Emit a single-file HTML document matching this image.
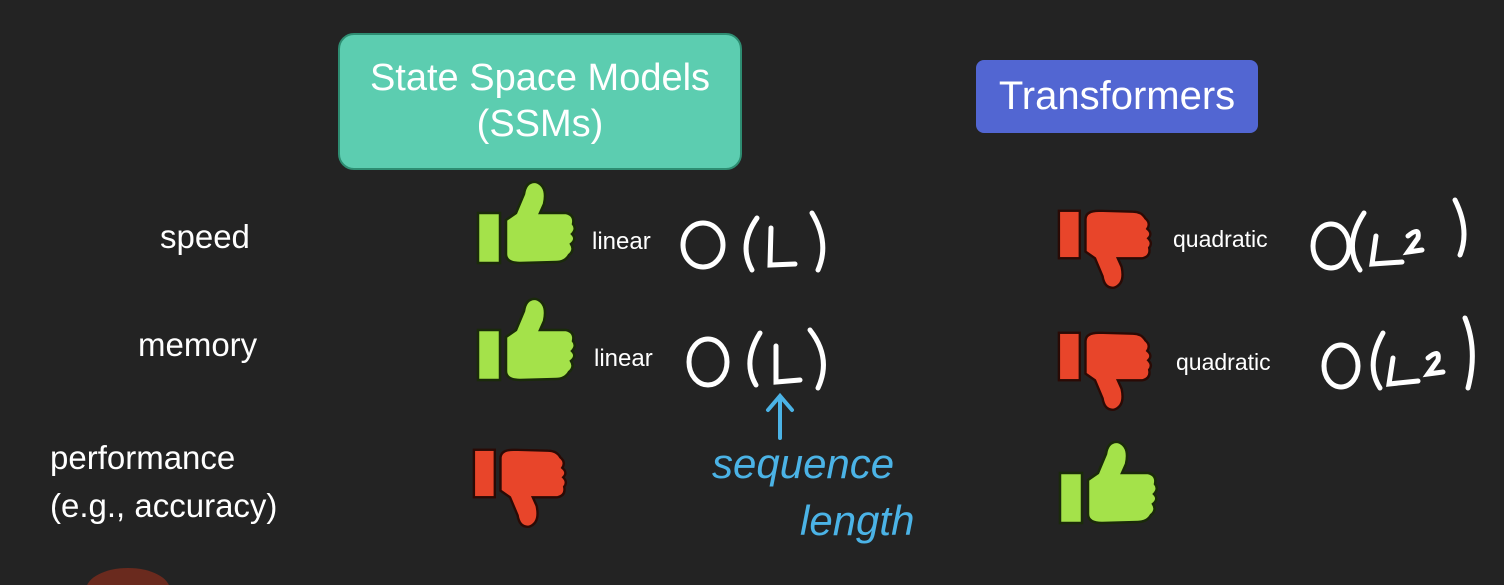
<!DOCTYPE html>
<html><head><style>
html,body{margin:0;padding:0;background:#232323;}
body{width:1504px;height:585px;position:relative;overflow:hidden;font-family:"Liberation Sans",sans-serif;color:#fff;}
.t{position:absolute;white-space:nowrap;}
</style></head><body>
<div style="position:absolute;left:338px;top:33px;width:404px;height:137px;background:#5ccdb0;border:2px solid #2e8d72;border-radius:16px;text-align:center;font-size:38px;line-height:46px;padding-top:20px;box-sizing:border-box;">State Space Models<br>(SSMs)</div>
<div style="position:absolute;left:976px;top:60px;width:282px;height:73px;background:#5266d2;border-radius:8px;text-align:center;font-size:40px;line-height:73px;">Transformers</div>
<div class="t" style="left:160px;top:218px;font-size:33px;">speed</div>
<div class="t" style="left:138px;top:326px;font-size:33px;">memory</div>
<div class="t" style="left:50px;top:434px;font-size:33px;line-height:48px;">performance<br>(e.g., accuracy)</div>
<div class="t" style="left:592px;top:228px;font-size:24px;">linear</div>
<div class="t" style="left:594px;top:345px;font-size:24px;">linear</div>
<div class="t" style="left:1173px;top:226px;font-size:23px;">quadratic</div>
<div class="t" style="left:1176px;top:349px;font-size:23px;">quadratic</div>
<svg width="1504" height="585" style="position:absolute;left:0;top:0">
<defs>
<g id="th">
<rect x="2" y="33" width="22" height="50" fill="#a4e24a" stroke="#1a2a0a" stroke-width="2.5"/>
<path d="M30,40 L40,33 L48,14 Q50,1 60,2 Q72,6 68,24 L64,33 L90,33 Q99,35 97,44 Q101,49 96,54 Q101,59 95,64 Q99,70 93,75 Q89,82 80,82 L44,83 Q30,83 30,74 Z" fill="#a4e24a" stroke="#1a2a0a" stroke-width="2.5"/>
</g>
<g id="dn">
<rect x="2" y="5" width="22" height="50" fill="#e8452a" stroke="#2a0a05" stroke-width="2.5"/>
<path d="M30,48 L40,55 L48,74 Q50,87 60,86 Q72,82 68,64 L64,55 L90,55 Q99,53 97,44 Q101,39 96,34 Q101,29 95,24 Q99,18 93,13 Q89,6 80,6 L44,5 Q30,5 30,14 Z" fill="#e8452a" stroke="#2a0a05" stroke-width="2.5"/>
</g>
</defs>
<use href="#th" transform="translate(476,180)"/>
<use href="#th" transform="translate(476,297)"/>
<use href="#th" transform="translate(1058,440)"/>
<use href="#dn" transform="translate(1057,206) scale(0.95)"/>
<use href="#dn" transform="translate(1057,328) scale(0.95)"/>
<use href="#dn" transform="translate(472,445) scale(0.95)"/>
<g fill="none" stroke="#fff" stroke-width="5" stroke-linecap="round">
<ellipse cx="703" cy="245" rx="20" ry="22"/>
<path d="M757,218 Q738,245 752,270"/><path d="M771,228 L770,265 L795,264"/><path d="M812,213 Q830,243 818,270"/>
<ellipse cx="708" cy="362" rx="19" ry="23"/>
<path d="M760,333 Q742,362 756,385"/><path d="M776,346 L776,382 L800,380"/><path d="M810,330 Q832,358 818,388"/>
<ellipse cx="1331" cy="246" rx="18" ry="22"/>
<path d="M1364,213 Q1343,245 1360,270"/><path d="M1376,236 L1372,264 L1402,262"/><path d="M1408,236 Q1420,226 1418,238 L1408,252 L1422,250"/><path d="M1455,200 Q1470,230 1460,255"/>
<ellipse cx="1341" cy="366" rx="17" ry="21"/>
<path d="M1383,333 Q1365,365 1380,388"/><path d="M1393,358 L1389,384 L1418,381"/><path d="M1428,358 Q1440,348 1438,360 L1428,374 L1443,372"/><path d="M1465,318 Q1478,350 1468,388"/>
</g>
<g fill="none" stroke="#4bb3e6" stroke-width="4" stroke-linecap="round">
<path d="M780,438 L780,398 M768,410 L780,396 L792,410"/>
</g>
<text x="712" y="478" font-family="Liberation Sans,sans-serif" font-size="42" fill="#4bb3e6" font-style="italic">sequence</text>
<text x="800" y="535" font-family="Liberation Sans,sans-serif" font-size="42" fill="#4bb3e6" font-style="italic">length</text>
<ellipse cx="128" cy="590" rx="42" ry="22" fill="#6a2a1e"/>
</svg>
</body></html>
